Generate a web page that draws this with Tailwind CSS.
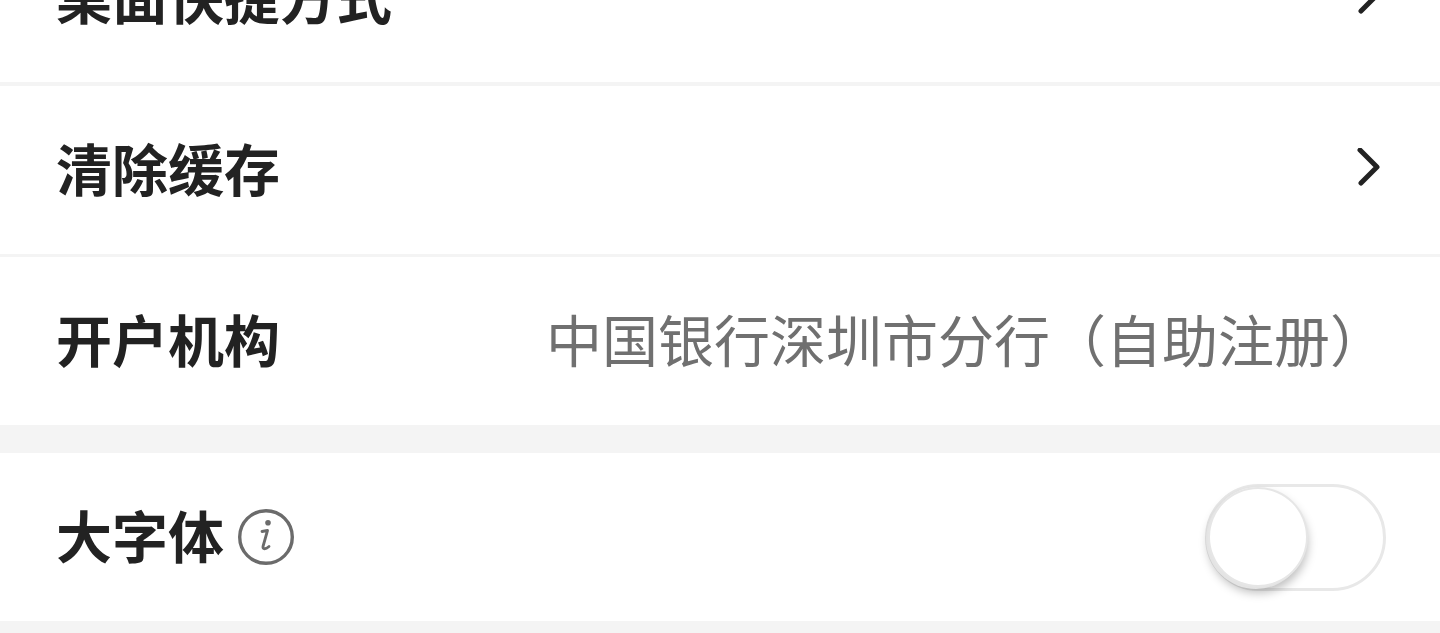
<!DOCTYPE html>
<html lang="zh">
<head>
<meta charset="utf-8">
<script src="https://cdn.jsdelivr.net/npm/@tailwindcss/browser@4"></script>
</head>
<body class="m-0 h-[633px] overflow-hidden bg-[#f4f4f4] font-['Noto_Sans_CJK_SC',sans-serif]">
<div class="-mt-[86px] flex flex-col">
  <div class="flex h-[168px] items-center justify-between bg-white pl-[56px] pr-[58px]">
    <span class="pb-[7px] text-[56px] leading-none font-bold text-[#222222]">桌面快捷方式</span>
    <svg class="h-[44px] w-[28px]" viewBox="0 0 28 44" fill="none" stroke="#222222" stroke-width="5" stroke-linecap="round" stroke-linejoin="round"><path d="M6 2 L23 19 L7 35"/></svg>
  </div>
  <div class="h-[4px] bg-[#f4f4f4]"></div>
  <div class="flex h-[168px] items-center justify-between bg-white pl-[56px] pr-[58px]">
    <span class="pb-[7px] text-[56px] leading-none font-bold text-[#222222]">清除缓存</span>
    <svg class="h-[44px] w-[28px]" viewBox="0 0 28 44" fill="none" stroke="#222222" stroke-width="5" stroke-linecap="round" stroke-linejoin="round"><path d="M6 2 L23 19 L7 35"/></svg>
  </div>
  <div class="h-[3px] bg-[#f4f4f4]"></div>
  <div class="flex h-[168px] items-center justify-between bg-white pl-[56px] pr-[54px]">
    <span class="pb-[7px] text-[56px] leading-none font-bold text-[#222222]">开户机构</span>
    <span class="pb-[7px] text-[56px] leading-none text-[#707070]">中国银行深圳市分行（自助注册）</span>
  </div>
  <div class="h-[28px] bg-[#f4f4f4]"></div>
  <div class="flex h-[168px] items-center justify-between bg-white pl-[56px] pr-[54px]">
    <div class="flex items-center gap-[14px]">
      <span class="pb-[7px] text-[56px] leading-none font-bold text-[#222222]">大字体</span>
      <svg class="h-[56px] w-[56px]" viewBox="0 0 56 56" fill="none"><circle cx="28" cy="28" r="26.3" stroke="#6b6b6b" stroke-width="3.4"/><circle cx="30" cy="13.8" r="2.8" fill="#6b6b6b"/><path d="M24 22.5 L29.5 21.5 L25 37.5 C24.5 40.5 27.5 40.5 31 37.5" stroke="#6b6b6b" stroke-width="2.8" stroke-linecap="round" stroke-linejoin="round"/></svg>
    </div>
    <div class="relative h-[107px] w-[181px] rounded-full border-[3px] border-[#e8e8e8] bg-white">
      <div class="absolute left-[2px] top-[2px] h-[96px] w-[96px] rounded-full bg-white shadow-[0_0_0_2px_#e6e6e6,-2px_2px_0_2px_#e4e4e4,0_6px_10px_2px_rgba(0,0,0,0.25)]"></div>
    </div>
  </div>
  <div class="h-[12px] bg-[#f4f4f4]"></div>
</div>
</body>
</html>
